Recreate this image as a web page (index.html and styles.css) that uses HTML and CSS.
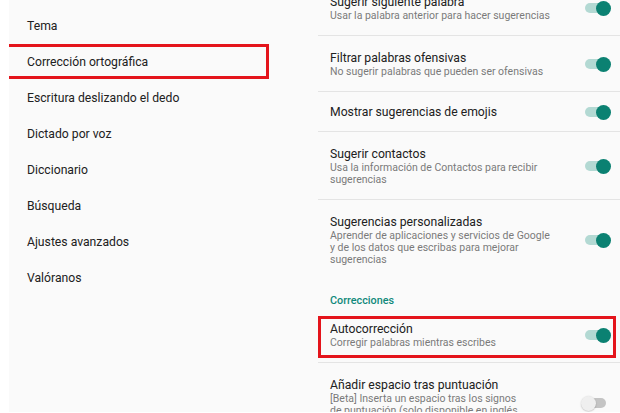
FILE: index.html
```html
<!DOCTYPE html>
<html lang="es">
<head>
<meta charset="utf-8">
<title>Corrección ortográfica</title>
<link rel="stylesheet" href="styles.css">
</head>
<body>
<div class="app">
  <nav class="nav">
    <div class="nav-item">Tema</div>
    <div class="nav-item selected">Corrección ortográfica<span class="mark mark-nav"></span></div>
    <div class="nav-item">Escritura deslizando el dedo</div>
    <div class="nav-item">Dictado por voz</div>
    <div class="nav-item">Diccionario</div>
    <div class="nav-item">Búsqueda</div>
    <div class="nav-item">Ajustes avanzados</div>
    <div class="nav-item">Valóranos</div>
  </nav>
  <main class="prefs">
    <div class="list">
      <div class="row divided">
        <div class="text">
          <div class="title">Sugerir siguiente palabra</div>
          <div class="sub">Usar la palabra anterior para hacer sugerencias</div>
        </div>
        <span class="switch on"><span class="track"></span><span class="thumb"></span></span>
      </div>
      <div class="row divided">
        <div class="text">
          <div class="title">Filtrar palabras ofensivas</div>
          <div class="sub">No sugerir palabras que pueden ser ofensivas</div>
        </div>
        <span class="switch on"><span class="track"></span><span class="thumb"></span></span>
      </div>
      <div class="row single divided">
        <div class="text">
          <div class="title">Mostrar sugerencias de emojis</div>
        </div>
        <span class="switch on"><span class="track"></span><span class="thumb"></span></span>
      </div>
      <div class="row divided">
        <div class="text">
          <div class="title">Sugerir contactos</div>
          <div class="sub">Usa la información de Contactos para recibir<br>sugerencias</div>
        </div>
        <span class="switch on"><span class="track"></span><span class="thumb"></span></span>
      </div>
      <div class="row">
        <div class="text">
          <div class="title">Sugerencias personalizadas</div>
          <div class="sub">Aprender de aplicaciones y servicios de Google<br>y de los datos que escribas para mejorar<br>sugerencias</div>
        </div>
        <span class="switch on"><span class="track"></span><span class="thumb"></span></span>
      </div>
      <div class="section">Correcciones</div>
      <div class="row divided">
        <div class="text">
          <div class="title">Autocorrección</div>
          <div class="sub">Corregir palabras mientras escribes</div>
        </div>
        <span class="switch on"><span class="track"></span><span class="thumb"></span></span>
        <span class="mark mark-row"></span>
      </div>
      <div class="row">
        <div class="text">
          <div class="title">Añadir espacio tras puntuación</div>
          <div class="sub">[Beta] Inserta un espacio tras los signos<br>de puntuación (solo disponible en inglés<br>de EE. UU.)</div>
        </div>
        <span class="switch off"><span class="track"></span><span class="thumb"></span></span>
      </div>
    </div>
  </main>
</div>
</body>
</html>
```

FILE: styles.css
```css
html, body {
  margin: 0;
  padding: 0;
  background: #ffffff;
  overflow: hidden;
}

body {
  font-family: Roboto, "Noto Sans", "Liberation Sans", sans-serif;
  color: #212121;
}

.app {
  display: flex;
  margin-left: 9px;
  height: 412px;
  background: #fafafa;
  overflow: hidden;
}

.nav {
  width: 309px;
  flex: none;
  padding-top: 8px;
}

.nav-item {
  position: relative;
  height: 36px;
  line-height: 36px;
  padding-left: 18px;
  font-size: 12.2px;
  color: #212121;
}

.mark {
  position: absolute;
  border: 3px solid #e4141b;
  box-sizing: border-box;
  pointer-events: none;
}

.mark-nav {
  left: -4px;
  top: 0;
  width: 264px;
  height: 35px;
}

.prefs {
  flex: 1;
  min-width: 0;
}

.list {
  margin-top: -20px;
}

.row {
  position: relative;
  display: flex;
  align-items: center;
  gap: 8px;
  padding: 14px 9px 14px 12px;
}

.row.single {
  padding-top: 12px;
  padding-bottom: 12px;
}

.row.divided {
  border-bottom: 1px solid #e4e4e4;
  padding-bottom: 13px;
}

.row.single.divided {
  padding-bottom: 11px;
}

.text {
  flex: 1;
  min-width: 0;
}

.title {
  font-size: 12.2px;
  line-height: 16px;
  color: #212121;
  white-space: nowrap;
}

.sub {
  font-size: 10.5px;
  line-height: 12px;
  color: #7a7a7a;
  white-space: nowrap;
}

.section {
  padding: 14px 12px 0;
  font-size: 10.8px;
  line-height: 13px;
  font-weight: 500;
  color: #10897b;
}

.switch {
  position: relative;
  flex: none;
  width: 30px;
  height: 15px;
}

.track {
  position: absolute;
  left: 4px;
  top: 2.5px;
  width: 21px;
  height: 10px;
  border-radius: 5px;
  background: #b3d9d3;
}

.thumb {
  position: absolute;
  top: 0;
  left: 0;
  width: 15px;
  height: 15px;
  border-radius: 50%;
  background: #0b8172;
}

.switch.on .thumb {
  left: 15px;
}

.switch.off .track {
  background: #c4c4c4;
}

.switch.off .thumb {
  background: #efefef;
  box-shadow: 0 0.5px 1.5px rgba(0, 0, 0, 0.25);
}

.mark-row {
  left: 0;
  right: 4px;
  top: 9px;
  height: 42px;
}
```
